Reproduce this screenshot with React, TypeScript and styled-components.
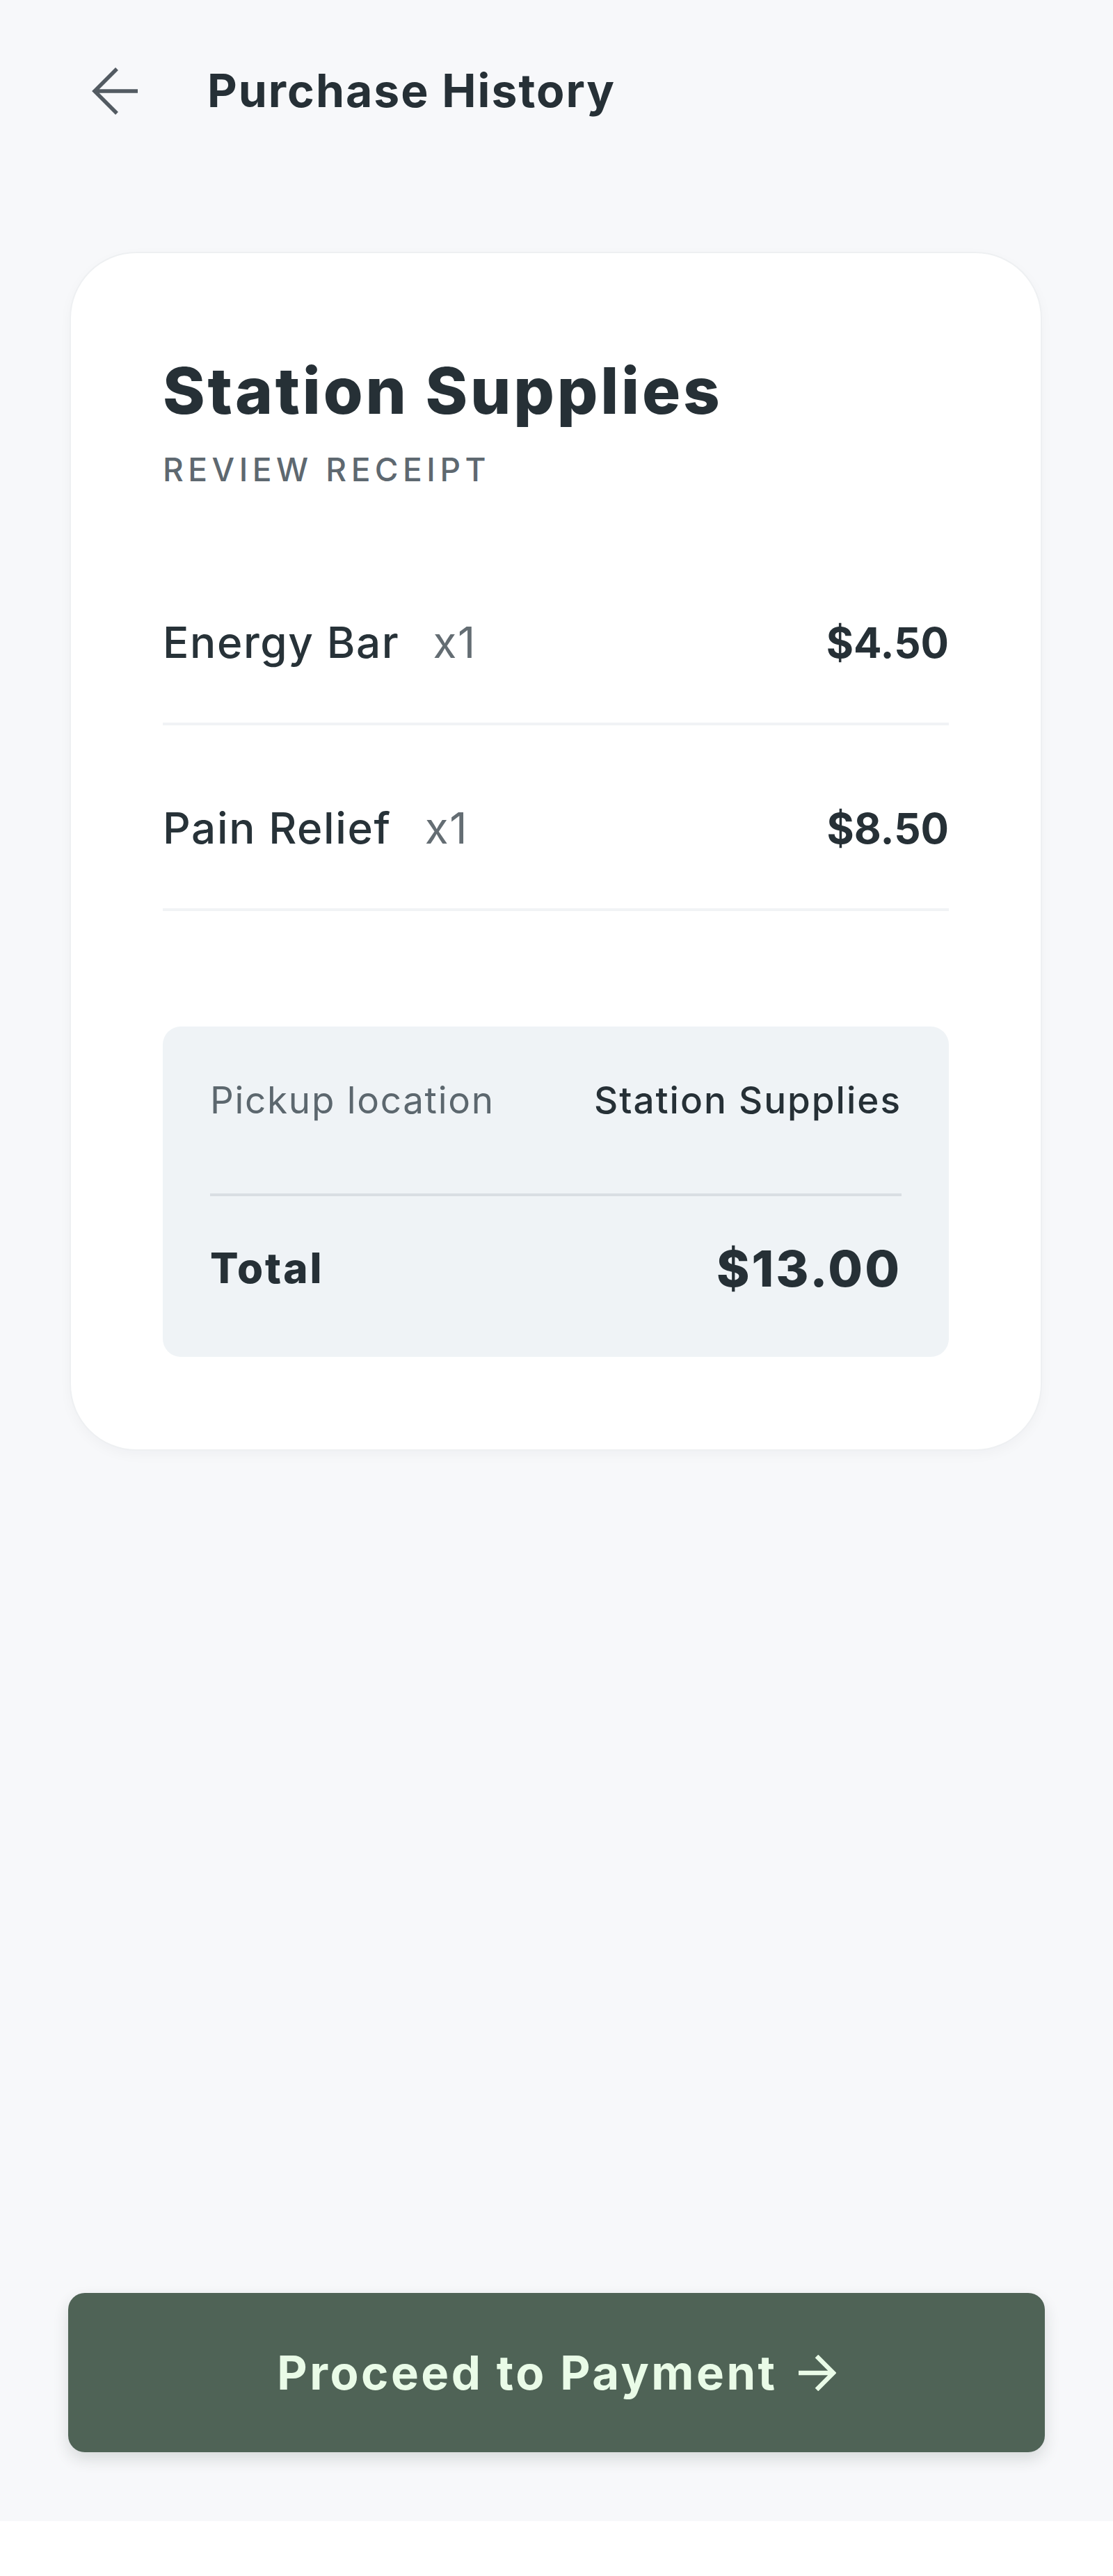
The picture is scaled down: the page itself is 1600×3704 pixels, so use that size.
import React, { FC } from 'react';
import styled, { createGlobalStyle } from 'styled-components';

const GlobalStyle = createGlobalStyle`
  html, body {
    margin: 0;
    padding: 0;
    background: #ffffff;
  }
  body {
    font-family: Inter, "Noto Sans", "Liberation Sans", sans-serif;
    color: #273238;
  }
`;

const Page = styled.div`
  min-height: 3625px;
  background-color: #f7f8fa;
  display: flex;
  flex-direction: column;
`;

const Header = styled.header`
  height: 262px;
  display: flex;
  align-items: center;
  padding-left: 130px;
`;

const BackButton = styled.button`
  width: 72px;
  height: 72px;
  padding: 0;
  border: none;
  background: transparent;
  display: flex;
  align-items: center;
  justify-content: center;
  color: #535b62;
  cursor: pointer;
`;

const HeaderTitle = styled.h1`
  margin: 0 0 0 96px;
  font-size: 66px;
  font-weight: 700;
  letter-spacing: 2px;
  line-height: 1.21;
  color: #263036;
`;

const Card = styled.section`
  margin: 102px 104px 0 102px;
  padding: 142px 132px 133px;
  background-color: #ffffff;
  border-radius: 94px;
  box-shadow: 0 0 0 2px #eef0f2, 0 6px 20px rgba(20, 30, 40, 0.04);
`;

const CardTitle = styled.h2`
  margin: 0;
  font-size: 92px;
  font-weight: 800;
  letter-spacing: 3.8px;
  line-height: 1.21;
  color: #263036;
`;

const Eyebrow = styled.div`
  margin-top: 31px;
  font-size: 46px;
  line-height: 1.21;
  letter-spacing: 6.5px;
  font-weight: 500;
  color: #5e6870;
`;

const Items = styled.div`
  margin-top: 72px;
`;

const ItemRow = styled.div`
  display: flex;
  align-items: baseline;
  justify-content: space-between;
  padding: 110px 0 78px;
  border-bottom: 4px solid #f1f3f5;
`;

const ItemName = styled.span`
  font-size: 62px;
  font-weight: 500;
  letter-spacing: 1.6px;
  line-height: 1.21;
  color: #273238;
`;

const Qty = styled.span`
  margin-left: 48px;
  font-weight: 400;
  color: #646d73;
`;

const Price = styled.span`
  font-size: 60px;
  font-weight: 700;
  line-height: 1.21;
  color: #263036;
`;

const Summary = styled.div`
  margin-top: 166px;
  padding: 74px 68px 84px;
  background-color: #eff3f6;
  border-radius: 26px;
`;

const SummaryRow = styled.div<{ $total?: boolean }>`
  display: flex;
  align-items: ${(p) => (p.$total ? 'center' : 'baseline')};
  justify-content: space-between;
  padding: ${(p) => (p.$total ? '60px 0 0' : '0 0 102px')};
  border-bottom: ${(p) => (p.$total ? 'none' : '4px solid #d9dee3')};
`;

const SummaryLabel = styled.span<{ $strong?: boolean }>`
  font-size: ${(p) => (p.$strong ? '60px' : '53px')};
  font-weight: ${(p) => (p.$strong ? 800 : 400)};
  letter-spacing: ${(p) => (p.$strong ? '3px' : '1.7px')};
  line-height: 1.21;
  color: ${(p) => (p.$strong ? '#263036' : '#5c676e')};
`;

const SummaryValue = styled.span<{ $strong?: boolean }>`
  font-size: ${(p) => (p.$strong ? '72px' : '53px')};
  font-weight: ${(p) => (p.$strong ? 800 : 500)};
  letter-spacing: ${(p) => (p.$strong ? '3px' : '2px')};
  line-height: 1.21;
  color: #263036;
`;

const Spacer = styled.div`
  flex: 1;
`;

const Footer = styled.div`
  padding: 0 98px 99px;
`;

const PayButton = styled.button`
  width: 100%;
  height: 229px;
  border: none;
  border-radius: 24px;
  background-color: #4f6356;
  color: #e9fbe7;
  font-family: Inter, "Noto Sans", "Liberation Sans", sans-serif;
  font-size: 67px;
  font-weight: 700;
  letter-spacing: 3.5px;
  display: flex;
  align-items: center;
  justify-content: center;
  gap: 28px;
  box-shadow: 0 10px 22px rgba(30, 40, 35, 0.14);
  cursor: pointer;
`;

const items = [
  { id: 'bar', name: 'Energy Bar', qty: 1, price: '$4.50' },
  { id: 'relief', name: 'Pain Relief', qty: 1, price: '$8.50' },
];

const BackArrow: FC = () => (
  <svg width="68" height="68" viewBox="0 0 68 68" fill="none">
    <path
      d="M66 34H4M36 2L4 34l32 32"
      stroke="currentColor"
      strokeWidth="5.5"
      strokeLinecap="butt"
      strokeLinejoin="miter"
    />
  </svg>
);

const NextArrow: FC = () => (
  <svg width="56" height="52" viewBox="0 0 56 52" fill="none">
    <path
      d="M2 26h50M28 2l24 24-24 24"
      stroke="currentColor"
      strokeWidth="6.5"
    />
  </svg>
);

const App: FC = () => {
  return (
    <>
      <GlobalStyle />
      <Page>
        <Header>
          <BackButton aria-label="Back">
            <BackArrow />
          </BackButton>
          <HeaderTitle>Purchase History</HeaderTitle>
        </Header>

        <Card>
          <CardTitle>Station Supplies</CardTitle>
          <Eyebrow>REVIEW RECEIPT</Eyebrow>

          <Items>
            {items.map(({ id, name, qty, price }) => (
              <ItemRow key={id}>
                <ItemName>
                  {name}
                  <Qty>x{qty}</Qty>
                </ItemName>
                <Price>{price}</Price>
              </ItemRow>
            ))}
          </Items>

          <Summary>
            <SummaryRow>
              <SummaryLabel>Pickup location</SummaryLabel>
              <SummaryValue>Station Supplies</SummaryValue>
            </SummaryRow>
            <SummaryRow $total>
              <SummaryLabel $strong>Total</SummaryLabel>
              <SummaryValue $strong>$13.00</SummaryValue>
            </SummaryRow>
          </Summary>
        </Card>

        <Spacer />

        <Footer>
          <PayButton>
            Proceed to Payment
            <NextArrow />
          </PayButton>
        </Footer>
      </Page>
    </>
  );
};

export default App;
